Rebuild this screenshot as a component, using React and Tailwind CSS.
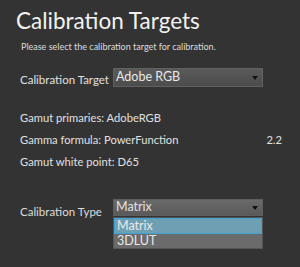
export default function App() {
  return (
    <div className="w-[300px] h-[267px] bg-[#333333] text-[#e6e6e6] overflow-hidden whitespace-nowrap" style={{ fontFamily: "Lato, 'Open Sans', sans-serif" }}>
      <div className="pl-[16px] pt-[8px] text-[22.5px] leading-[26px] text-[#f2f2f2]">Calibration Targets</div>
      <div className="pl-[21px] mt-[7px] text-[9px] leading-[12px] text-[#dddddd]">Please select the calibration target for calibration.</div>
      <div className="flex items-center mt-[15px] h-[19px]">
        <div className="pl-[20px] w-[113px] text-[11.5px] mt-[4px] text-[#e0e0e0]">Calibration Target</div>
        <div className="w-[150px] h-[19px] border border-[#606060] bg-gradient-to-b from-[#5a5a5a] to-[#4c4c4c] flex items-center justify-between pl-[2px] pr-[4px] text-[12.5px] text-[#e8e8e8]">
          <span>Adobe RGB</span>
          <svg width="6" height="4" viewBox="0 0 6 4"><path d="M0 0H6L3 4Z" fill="#111" /></svg>
        </div>
      </div>
      <div className="pl-[20px] mt-[23px] flex flex-col gap-[6px] text-[11.2px] leading-[16px] text-[#e0e0e0]">
        <div>Gamut primaries: AdobeRGB</div>
        <div className="flex justify-between pr-[18px]"><span>Gamma formula: PowerFunction</span><span>2.2</span></div>
        <div>Gamut white point: D65</div>
      </div>
      <div className="flex mt-[29px]">
        <div className="pl-[20px] w-[113px] h-[17px] flex items-center mt-[4px] text-[11.5px] text-[#dcdcdc]">Calibration Type</div>
        <div className="w-[150px] flex flex-col">
          <div className="h-[17px] border border-[#5e5e5e] bg-gradient-to-b from-[#6a6a6a] to-[#5a5a5a] flex items-center justify-between pl-[2px] pr-[4px] text-[12.5px] text-[#e0e0e0]">
            <span>Matrix</span>
            <svg width="6" height="4" viewBox="0 0 6 4"><path d="M0 0H6L3 4Z" fill="#111" /></svg>
          </div>
          <div className="mt-[1px] border border-[#555] bg-[#6b6b6b] flex flex-col text-[12.5px] text-[#e8e8e8]">
            <div className="h-[16px] border border-[#3fa3d6] bg-[#6f9fb3] flex items-center pl-[2px]">Matrix</div>
            <div className="h-[14px] flex items-center pl-[3px]">3DLUT</div>
          </div>
        </div>
      </div>
    </div>
  );
}
